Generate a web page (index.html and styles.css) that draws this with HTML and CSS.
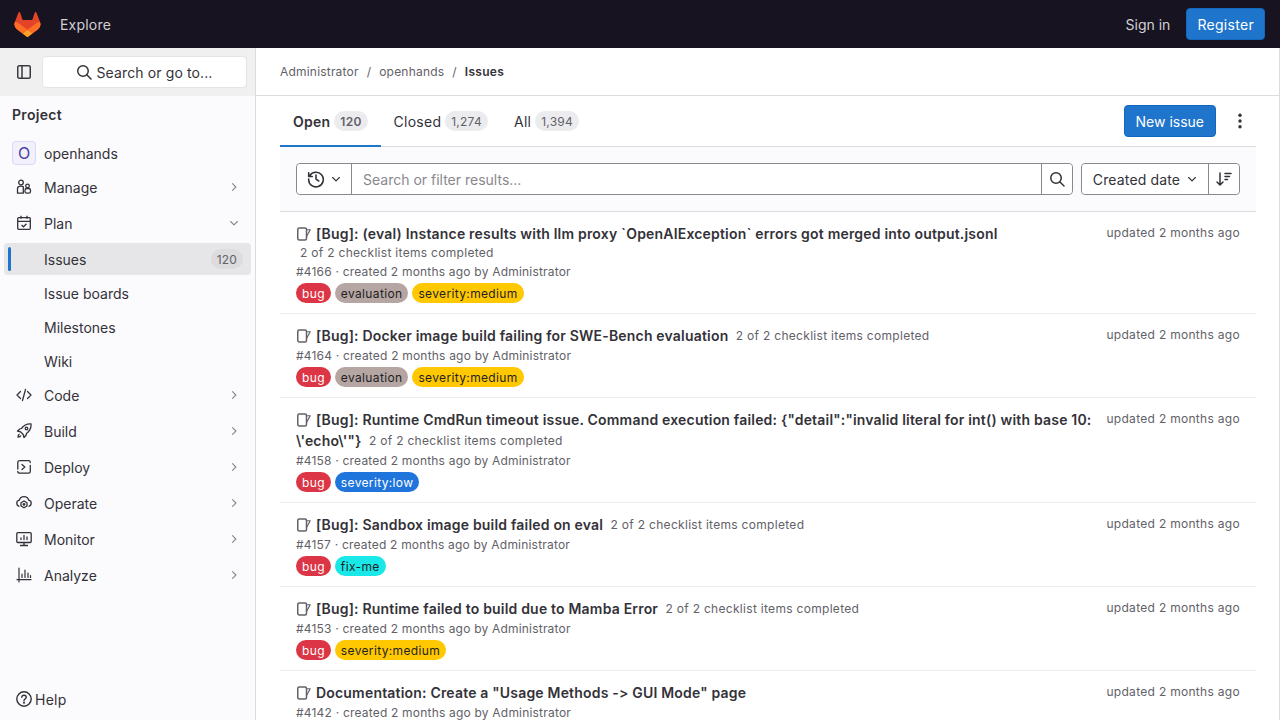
FILE: index.html
```html
<!DOCTYPE html>
<html lang="en">
<head>
    <meta charset="UTF-8">
    <title>Issues · openhands</title>
    <link rel="stylesheet" href="styles.css">
</head>
<body>
    <svg class="icon-defs" width="0" height="0">
        <symbol id="i-chevron-right" viewBox="0 0 16 16"><path d="M6 3.5 10.5 8 6 12.5" fill="none" stroke="currentColor" stroke-width="1.5" stroke-linecap="round" stroke-linejoin="round"/></symbol>
        <symbol id="i-chevron-down" viewBox="0 0 16 16"><path d="M3.5 6 8 10.5 12.5 6" fill="none" stroke="currentColor" stroke-width="1.5" stroke-linecap="round" stroke-linejoin="round"/></symbol>
        <symbol id="i-search" viewBox="0 0 16 16"><circle cx="7" cy="7" r="5.25" fill="none" stroke="currentColor" stroke-width="1.5"/><path d="m11 11 4 4" fill="none" stroke="currentColor" stroke-width="1.5" stroke-linecap="round"/></symbol>
        <symbol id="i-issue" viewBox="0 0 16 16"><rect x="1.75" y="2" width="8.75" height="12" rx="1.5" fill="none" stroke="currentColor" stroke-width="1.5"/><path d="M10.5 3.75h3.75L10.5 10.5" fill="none" stroke="currentColor" stroke-width="1.2" stroke-linejoin="round"/></symbol>
    </svg>

    <header class="topbar">
        <div class="topbar-left">
            <svg class="logo" width="27" height="25" viewBox="0 0 25 24">
                <path d="m24.507 9.5-.034-.09L21.082.562a.896.896 0 0 0-1.694.091l-2.29 7.01H7.825L5.535.653a.898.898 0 0 0-1.694-.09L.451 9.411.416 9.5a6.297 6.297 0 0 0 2.09 7.278l.012.01.03.022 5.16 3.867 2.56 1.935 1.554 1.176a1.051 1.051 0 0 0 1.268 0l1.555-1.176 2.56-1.935 5.197-3.89.014-.01A6.297 6.297 0 0 0 24.507 9.5Z" fill="#e24329"/>
                <path d="m24.507 9.5-.034-.09a11.44 11.44 0 0 0-4.56 2.051l-7.447 5.632 4.742 3.584 5.197-3.89.014-.01A6.297 6.297 0 0 0 24.507 9.5Z" fill="#fc6d26"/>
                <path d="m7.707 20.677 2.56 1.935 1.555 1.176a1.051 1.051 0 0 0 1.268 0l1.555-1.176 2.56-1.935-4.743-3.584-4.755 3.584Z" fill="#fca326"/>
                <path d="M5.01 11.461a11.43 11.43 0 0 0-4.56-2.05L.416 9.5a6.297 6.297 0 0 0 2.09 7.278l.012.01.03.022 5.16 3.867 4.745-3.584-7.444-5.632Z" fill="#fc6d26"/>
            </svg>
            <a class="topbar-link explore">Explore</a>
        </div>
        <div class="topbar-right">
            <a class="topbar-link">Sign in</a>
            <a class="btn-primary register">Register</a>
        </div>
    </header>

    <div class="layout">
        <aside class="sidebar">
            <div class="sidebar-top">
                <svg class="sidebar-toggle" width="16" height="16" viewBox="0 0 16 16"><rect x="1.75" y="1.75" width="12.5" height="12.5" rx="1.5" fill="none" stroke="currentColor" stroke-width="1.5"/><path d="M6 2v12" stroke="currentColor" stroke-width="1.5"/></svg>
                <button class="sidebar-search">
                    <svg width="16" height="16"><use href="#i-search"/></svg>
                    Search or go to...
                </button>
            </div>
            <div class="sidebar-title">Project</div>
            <a class="project-link"><span class="avatar">O</span>openhands</a>
            <nav class="nav">
                <a class="nav-item">
                    <svg class="nav-icon" viewBox="0 0 16 16" width="16" height="16" fill="none" stroke="currentColor" stroke-width="1.3"><circle cx="5" cy="3.5" r="2.3"/><path d="M1.5 14.2V9.5c0-1.4 1-2.3 3.5-2.3 1 0 1.8.2 2.3.5v6.5Z"/><circle cx="11.5" cy="7" r="1.8"/><rect x="9" y="9.5" width="5.5" height="4.7" rx="1.8"/></svg>
                    <span class="nav-label">Manage</span>
                    <svg class="nav-caret" width="12" height="12"><use href="#i-chevron-right"/></svg>
                </a>
                <a class="nav-item">
                    <svg class="nav-icon" viewBox="0 0 16 16" width="16" height="16" fill="none" stroke="currentColor" stroke-width="1.3"><rect x="1.7" y="2.7" width="12.6" height="11.6" rx="1"/><path d="M1.7 6.3h12.6M5 .8v3M11 .8v3"/><path d="m5.5 10 2 1.8 3-3"/></svg>
                    <span class="nav-label">Plan</span>
                    <svg class="nav-caret" width="12" height="12"><use href="#i-chevron-down"/></svg>
                </a>
                <div class="subnav">
                    <a class="subnav-item active"><span class="nav-label">Issues</span><span class="count">120</span></a>
                    <a class="subnav-item">Issue boards</a>
                    <a class="subnav-item">Milestones</a>
                    <a class="subnav-item">Wiki</a>
                </div>
                <a class="nav-item">
                    <svg class="nav-icon" viewBox="0 0 16 16" width="16" height="16" fill="none" stroke="currentColor" stroke-width="1.3" stroke-linecap="round" stroke-linejoin="round"><path d="M4.5 4.5 1 8l3.5 3.5M11.5 4.5 15 8l-3.5 3.5M9.5 2.5l-3 11"/></svg>
                    <span class="nav-label">Code</span>
                    <svg class="nav-caret" width="12" height="12"><use href="#i-chevron-right"/></svg>
                </a>
                <a class="nav-item">
                    <svg class="nav-icon" viewBox="0 0 16 16" width="16" height="16" fill="none" stroke="currentColor" stroke-width="1.3" stroke-linejoin="round"><path d="M15 1c-4-.3-7 1-9.5 4.5L3.8 6 1.500 8l3 .8 2.700 2.700.8 3 2-2.300.5-1.700C13.800 8 15.300 5 15 1Z"/><circle cx="10.5" cy="5.5" r="1.3"/><path d="M3.5 11c-1 .5-1.500 2-1.500 3 1 0 2.500-.5 3-1.500"/></svg>
                    <span class="nav-label">Build</span>
                    <svg class="nav-caret" width="12" height="12"><use href="#i-chevron-right"/></svg>
                </a>
                <a class="nav-item">
                    <svg class="nav-icon" viewBox="0 0 16 16" width="16" height="16" fill="none" stroke="currentColor" stroke-width="1.3" stroke-linecap="round" stroke-linejoin="round"><path d="M1.8 10V3.5c0-1 .8-1.8 1.8-1.800h8.900c1 0 1.800.8 1.800 1.800M14.300 6.500v5.900c0 1-.8 1.800-1.800 1.800H3.600c-1 0-1.800-.8-1.800-1.800"/><path d="m6 5.500 2.800 2.500L6 10.500"/></svg>
                    <span class="nav-label">Deploy</span>
                    <svg class="nav-caret" width="12" height="12"><use href="#i-chevron-right"/></svg>
                </a>
                <a class="nav-item">
                    <svg class="nav-icon" viewBox="0 0 16 16" width="16" height="16" fill="none" stroke="currentColor" stroke-width="1.3" stroke-linejoin="round"><path d="M3.500 11.500C1.800 11 .8 9.700.8 8.300c0-1.500 1-2.800 2.500-3.100C3.900 3.100 5.800 1.700 8 1.700s4.100 1.400 4.700 3.500c1.500.3 2.500 1.600 2.500 3.100 0 1.400-1 2.700-2.700 3.200"/><path d="m8 6 3 1.700V11l-3 1.800L5 11V7.700Z"/><circle cx="8" cy="9.400" r=".8"/></svg>
                    <span class="nav-label">Operate</span>
                    <svg class="nav-caret" width="12" height="12"><use href="#i-chevron-right"/></svg>
                </a>
                <a class="nav-item">
                    <svg class="nav-icon" viewBox="0 0 16 16" width="16" height="16" fill="none" stroke="currentColor" stroke-width="1.3" stroke-linecap="round"><rect x=".8" y="1.7" width="14.4" height="9.8" rx="1"/><path d="M8 11.500v3M4.500 14.500h7M5 8.500V7M8 8.500v-4M11 8.500V6"/></svg>
                    <span class="nav-label">Monitor</span>
                    <svg class="nav-caret" width="12" height="12"><use href="#i-chevron-right"/></svg>
                </a>
                <a class="nav-item">
                    <svg class="nav-icon" viewBox="0 0 16 16" width="16" height="16" fill="none" stroke="currentColor" stroke-width="1.2" stroke-linecap="round"><path d="M3 1v14M1 12.700h14M6 10.500V7M9 10.500V3M12 10.500V6M14.500 10.500v-2"/></svg>
                    <span class="nav-label">Analyze</span>
                    <svg class="nav-caret" width="12" height="12"><use href="#i-chevron-right"/></svg>
                </a>
            </nav>
            <a class="help">
                <svg viewBox="0 0 16 16" width="16" height="16" fill="none" stroke="currentColor" stroke-width="1.4" stroke-linecap="round"><circle cx="8" cy="8" r="7.2"/><path d="M5.800 6.200C5.900 5 6.800 4.300 8 4.300c1.300 0 2.200.8 2.200 1.900 0 1.800-2.200 1.700-2.200 3.400"/><circle cx="8" cy="11.700" r=".4"/></svg>
                Help
            </a>
        </aside>

        <main class="content">
            <div class="breadcrumbs">
                <a>Administrator</a><span class="sep">/</span><a>openhands</a><span class="sep">/</span><b>Issues</b>
            </div>
            <div class="page">
                <div class="tabs-row">
                    <ul class="tabs">
                        <li class="tab active">Open <span class="tab-count">120</span></li>
                        <li class="tab">Closed <span class="tab-count">1,274</span></li>
                        <li class="tab">All <span class="tab-count">1,394</span></li>
                    </ul>
                    <div class="tabs-actions">
                        <a class="btn-primary">New issue</a>
                        <svg class="kebab" width="16" height="16" viewBox="0 0 16 16" fill="currentColor"><circle cx="8" cy="2.300" r="1.700"/><circle cx="8" cy="8" r="1.700"/><circle cx="8" cy="13.700" r="1.700"/></svg>
                    </div>
                </div>

                <div class="filter-bar">
                    <div class="filter-group">
                        <button class="history-btn">
                            <svg viewBox="0 0 16 16" width="18" height="18" fill="none" stroke="currentColor" stroke-width="1.4" stroke-linecap="round" stroke-linejoin="round"><path d="M2.200 5.500A6.500 6.500 0 1 1 1.500 8M1.500 2.500v3.200h3.200M8 4.500V8l2.500 1.800"/></svg>
                            <svg width="12" height="12"><use href="#i-chevron-down"/></svg>
                        </button>
                        <div class="filter-input">Search or filter results...</div>
                        <button class="search-btn"><svg width="16" height="16"><use href="#i-search"/></svg></button>
                    </div>
                    <div class="sort-group">
                        <button class="sort-btn">Created date <svg width="12" height="12"><use href="#i-chevron-down"/></svg></button>
                        <button class="sort-dir">
                            <svg viewBox="0 0 16 16" width="16" height="16" fill="none" stroke="currentColor" stroke-width="1.5" stroke-linecap="round" stroke-linejoin="round"><path d="M4 2v12M1 11l3 3 3-3M9 2.500h6M9 5.500h4.500M9 8.500h2.500"/></svg>
                        </button>
                    </div>
                </div>

                <ul class="issues">
                    <li class="issue">
                        <div class="issue-main">
                            <div class="issue-title"><svg class="issue-icon" width="16" height="16"><use href="#i-issue"/></svg><a>[Bug]: (eval) Instance results with llm proxy `OpenAIException` errors got merged into output.jsonl</a> <span class="tasks">2 of 2 checklist items completed</span></div>
                            <div class="issue-meta">#4166 · created 2 months ago by Administrator</div>
                            <div class="labels"><span class="label red">bug</span><span class="label taupe">evaluation</span><span class="label yellow">severity:medium</span></div>
                        </div>
                        <div class="issue-updated">updated 2 months ago</div>
                    </li>
                    <li class="issue">
                        <div class="issue-main">
                            <div class="issue-title"><svg class="issue-icon" width="16" height="16"><use href="#i-issue"/></svg><a>[Bug]: Docker image build failing for SWE-Bench evaluation</a> <span class="tasks">2 of 2 checklist items completed</span></div>
                            <div class="issue-meta">#4164 · created 2 months ago by Administrator</div>
                            <div class="labels"><span class="label red">bug</span><span class="label taupe">evaluation</span><span class="label yellow">severity:medium</span></div>
                        </div>
                        <div class="issue-updated">updated 2 months ago</div>
                    </li>
                    <li class="issue">
                        <div class="issue-main">
                            <div class="issue-title"><svg class="issue-icon" width="16" height="16"><use href="#i-issue"/></svg><a>[Bug]: Runtime CmdRun timeout issue. Command execution failed: {"detail":"invalid literal for int() with base 10: \'echo\'"}</a> <span class="tasks">2 of 2 checklist items completed</span></div>
                            <div class="issue-meta">#4158 · created 2 months ago by Administrator</div>
                            <div class="labels"><span class="label red">bug</span><span class="label blue">severity:low</span></div>
                        </div>
                        <div class="issue-updated">updated 2 months ago</div>
                    </li>
                    <li class="issue">
                        <div class="issue-main">
                            <div class="issue-title"><svg class="issue-icon" width="16" height="16"><use href="#i-issue"/></svg><a>[Bug]: Sandbox image build failed on eval</a> <span class="tasks">2 of 2 checklist items completed</span></div>
                            <div class="issue-meta">#4157 · created 2 months ago by Administrator</div>
                            <div class="labels"><span class="label red">bug</span><span class="label cyan">fix-me</span></div>
                        </div>
                        <div class="issue-updated">updated 2 months ago</div>
                    </li>
                    <li class="issue">
                        <div class="issue-main">
                            <div class="issue-title"><svg class="issue-icon" width="16" height="16"><use href="#i-issue"/></svg><a>[Bug]: Runtime failed to build due to Mamba Error</a> <span class="tasks">2 of 2 checklist items completed</span></div>
                            <div class="issue-meta">#4153 · created 2 months ago by Administrator</div>
                            <div class="labels"><span class="label red">bug</span><span class="label yellow">severity:medium</span></div>
                        </div>
                        <div class="issue-updated">updated 2 months ago</div>
                    </li>
                    <li class="issue">
                        <div class="issue-main">
                            <div class="issue-title"><svg class="issue-icon" width="16" height="16"><use href="#i-issue"/></svg><a>Documentation: Create a "Usage Methods -&gt; GUI Mode" page</a></div>
                            <div class="issue-meta">#4142 · created 2 months ago by Administrator</div>
                        </div>
                        <div class="issue-updated">updated 2 months ago</div>
                    </li>
                </ul>
            </div>
        </main>
    </div>
</body>
</html>
```

FILE: styles.css
```css
* {
    box-sizing: border-box;
}

html,
body {
    height: 720px;
    margin: 0;
    overflow: hidden;
}

body {
    font-family: Inter, "Noto Sans", sans-serif;
    font-size: 14px;
    color: #333238;
    background-color: #fff;
}

button {
    font: inherit;
    color: inherit;
    background: #fff;
    padding: 0;
}

ul {
    list-style: none;
    margin: 0;
    padding: 0;
}

.icon-defs {
    position: absolute;
}

/* top bar */
.topbar {
    height: 48px;
    background-color: #171321;
    color: #d1d0d3;
    display: flex;
    align-items: center;
    justify-content: space-between;
    padding: 0 15px 0 14px;
}

.topbar-left,
.topbar-right {
    display: flex;
    align-items: center;
}

.topbar-left {
    gap: 19px;
}

.topbar-right {
    gap: 16px;
}

.explore {
    letter-spacing: .2px;
}

.btn-primary {
    background-color: #1f75cb;
    border: 1px solid #1068bf;
    border-radius: 4px;
    color: #fff;
    height: 32px;
    padding: 0 11px;
    display: inline-flex;
    align-items: center;
}

.register {
    padding: 0 10px;
    letter-spacing: .3px;
}

/* sidebar */
.layout {
    display: flex;
    height: 672px;
}

.sidebar {
    width: 256px;
    flex: none;
    background-color: #fbfafd;
    border-right: 1px solid #dcdcde;
    display: flex;
    flex-direction: column;
}

.sidebar-top {
    height: 48px;
    background-color: #f0f0f0;
    display: flex;
    align-items: center;
    padding: 0 8px 0 16px;
    gap: 10px;
    flex: none;
}

.sidebar-toggle {
    flex: none;
    color: #3a383f;
}

.sidebar-search {
    flex: 1;
    height: 32px;
    border: 1px solid #e4e4e6;
    border-radius: 4px;
    display: flex;
    align-items: center;
    justify-content: center;
    gap: 4px;
    letter-spacing: .12px;
}

.sidebar-title {
    font-weight: 600;
    padding: 10px 12px 0;
    height: 36px;
    letter-spacing: .3px;
}

.project-link {
    display: flex;
    align-items: center;
    gap: 8px;
    height: 24px;
    margin-top: 9px;
    padding-left: 12px;
}

.avatar {
    width: 24px;
    height: 24px;
    background-color: #f1f0fb;
    border: 1px solid #dcd8f5;
    border-radius: 4px;
    color: #4b3fa8;
    font-size: 16px;
    display: flex;
    align-items: center;
    justify-content: center;
}

.nav {
    padding: 4px 4px 0;
    display: flex;
    flex-direction: column;
}

.nav-item {
    height: 36px;
    display: flex;
    align-items: center;
    padding: 0 12px;
}

.nav-icon {
    flex: none;
    margin-right: 12px;
}

.nav-label {
    flex: 1;
}

.nav-caret {
    flex: none;
    color: #89888d;
    margin-right: -1px;
}

.subnav {
    display: flex;
    flex-direction: column;
    gap: 2px;
    margin-top: 2px;
}

.subnav-item {
    height: 32px;
    display: flex;
    align-items: center;
    padding: 0 8px 0 40px;
    border-radius: 4px;
    position: relative;
}

.subnav-item.active {
    background-color: #e6e6e8;
}

.subnav-item.active::before {
    content: "";
    position: absolute;
    left: 4px;
    top: 4px;
    bottom: 4px;
    width: 3px;
    border-radius: 2px;
    background-color: #1f75cb;
}

.count {
    background-color: #dcdcde;
    color: #626168;
    font-size: 12px;
    letter-spacing: .2px;
    border-radius: 10px;
    height: 20px;
    padding: 0 6px;
    display: flex;
    align-items: center;
}

.help {
    margin-top: auto;
    margin-bottom: 9px;
    margin-left: 16px;
    display: flex;
    align-items: center;
    gap: 3px;
    height: 24px;
    letter-spacing: .25px;
}

/* main */
.content {
    flex: 1;
    min-width: 0;
    border-right: 1px solid #dcdcde;
}

.breadcrumbs {
    height: 48px;
    border-bottom: 1px solid #dcdcde;
    padding: 0 24px;
    display: flex;
    align-items: center;
    font-size: 12px;
    letter-spacing: .2px;
    color: #626168;
}

.breadcrumbs b {
    font-weight: 600;
    color: #333238;
    letter-spacing: .3px;
}

.sep {
    margin: 0 8px;
}

.page {
    padding: 0 23px 0 24px;
}

.tabs-row {
    height: 51px;
    display: flex;
    justify-content: space-between;
    align-items: center;
    border-bottom: 1px solid #dcdcde;
}

.tabs {
    display: flex;
    height: 50px;
}

.tab {
    padding: 0 13px;
    display: flex;
    align-items: center;
    gap: 4px;
    position: relative;
    letter-spacing: .25px;
}

.tab.active {
    font-weight: 600;
}

.tab.active::after {
    content: "";
    position: absolute;
    left: 0;
    right: 0;
    bottom: -1px;
    height: 2px;
    background-color: #1f75cb;
}

.tab-count {
    background-color: #ececef;
    color: #626168;
    font-size: 12px;
    border-radius: 10px;
    height: 20px;
    padding: 0 6px;
    display: flex;
    align-items: center;
}

.tabs-actions {
    display: flex;
    align-items: center;
    gap: 16px;
    padding-right: 8px;
}

.filter-bar {
    height: 65px;
    background-color: #fbfafd;
    border-bottom: 1px solid #dcdcde;
    display: flex;
    align-items: center;
    padding: 0 16px;
    gap: 8px;
}

.filter-group,
.sort-group {
    display: flex;
    height: 32px;
    border: 1px solid #89888d;
    border-radius: 4px;
    background-color: #fff;
}

.filter-group {
    flex: 1;
}

.history-btn {
    width: 55px;
    border: 0;
    border-right: 1px solid #89888d;
    border-radius: 4px 0 0 4px;
    display: flex;
    align-items: center;
    justify-content: center;
    gap: 5px;
}

.filter-input {
    flex: 1;
    padding: 0 11px;
    display: flex;
    align-items: center;
    color: #89888d;
}

.search-btn {
    width: 31px;
    border: 0;
    border-left: 1px solid #89888d;
    border-radius: 0 4px 4px 0;
    display: flex;
    align-items: center;
    justify-content: center;
}

.sort-btn {
    width: 127px;
    border: 0;
    border-right: 1px solid #89888d;
    border-radius: 4px 0 0 4px;
    display: flex;
    align-items: center;
    justify-content: center;
    gap: 6px;
    padding-left: 1px;
    letter-spacing: .15px;
}

.sort-dir {
    width: 30px;
    border: 0;
    border-radius: 0 4px 4px 0;
    display: flex;
    align-items: center;
    justify-content: center;
}

/* issue rows */
.issue {
    display: flex;
    justify-content: space-between;
    gap: 14px;
    padding: 11px 16px 10px;
    border-bottom: 1px solid #ececef;
}

.issue-main {
    flex: 1;
    min-width: 0;
}

.issue-title {
    font-size: 12px;
    line-height: 17px;
}

.issue-title a {
    font-size: 14px;
    font-weight: 600;
    line-height: 21px;
    letter-spacing: .19px;
}

.issue-icon {
    vertical-align: -3px;
    margin-right: 4px;
    color: #626168;
}

.tasks {
    display: inline-block;
    color: #626168;
    margin-left: 4px;
    line-height: 17px;
    letter-spacing: .3px;
    vertical-align: 1px;
}

.issue-meta {
    font-size: 12px;
    color: #626168;
    line-height: 19px;
    letter-spacing: .2px;
}

.labels {
    display: flex;
    gap: 4px;
    margin-top: 2px;
}

.label {
    height: 20px;
    border-radius: 10px;
    padding: 0 6px;
    font-size: 12px;
    letter-spacing: .35px;
    display: flex;
    align-items: center;
}

.red {
    background-color: #dc3545;
    color: #fff;
}

.taupe {
    background-color: #b5a6a3;
    color: #1f1e24;
}

.yellow {
    background-color: #ffc800;
    color: #1f1e24;
}

.blue {
    background-color: #1f75dc;
    color: #fff;
}

.cyan {
    background-color: #1ae8e8;
    color: #1f1e24;
}

.issue-updated {
    flex: none;
    font-size: 12px;
    color: #626168;
    line-height: 20px;
    letter-spacing: .3px;
}
```
